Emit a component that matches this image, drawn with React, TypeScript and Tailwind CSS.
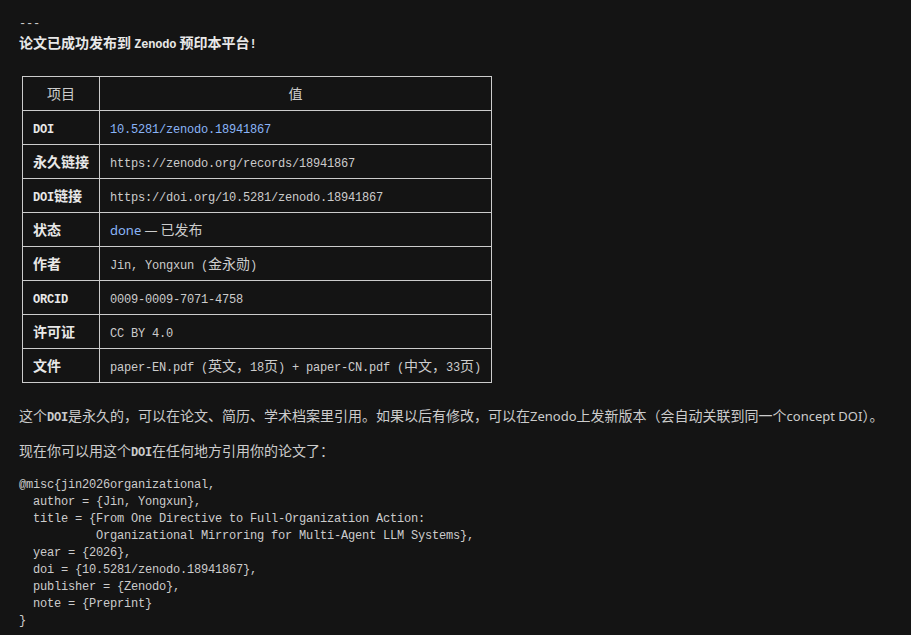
import React from 'react';

const mono = "font-['Liberation_Mono',monospace] text-[12px] tracking-[-0.2px]";
const sans = "font-['Noto_Sans',sans-serif] text-[13px]";

const M = ({ children }: { children: React.ReactNode }) => <span className={mono}>{children}</span>;
const S = ({ children }: { children: React.ReactNode }) => <span className={sans}>{children}</span>;

const rows: { k: React.ReactNode; v: React.ReactNode }[] = [
  { k: <M>DOI</M>, v: <span className={`${mono} text-[#8ab4f8]`}>10.5281/zenodo.18941867</span> },
  { k: '永久链接', v: <M>https://zenodo.org/records/18941867</M> },
  { k: <><M>DOI</M>链接</>, v: <M>https://doi.org/10.5281/zenodo.18941867</M> },
  { k: '状态', v: <><span className={`${sans} text-[#8ab4f8]`}>done</span> <S>—</S> 已发布</> },
  { k: '作者', v: <><M>Jin, Yongxun (</M>金永勋<M>)</M></> },
  { k: <M>ORCID</M>, v: <M>0009-0009-7071-4758</M> },
  { k: '许可证', v: <M>CC BY 4.0</M> },
  {
    k: '文件',
    v: (
      <>
        <M>paper-EN.pdf (</M>英文，<M>18</M>页<M>) + paper-CN.pdf (</M>中文，<M>33</M>页<M>)</M>
      </>
    ),
  },
];

const bib = `@misc{jin2026organizational,
  author = {Jin, Yongxun},
  title = {From One Directive to Full-Organization Action:
           Organizational Mirroring for Multi-Agent LLM Systems},
  year = {2026},
  doi = {10.5281/zenodo.18941867},
  publisher = {Zenodo},
  note = {Preprint}
}`;

export default function App() {
  return (
    <div className="min-h-[635px] w-full bg-[#141414] text-[#cccccc] font-['Noto_Sans_CJK_SC',sans-serif] text-[14px]">
      <div className="px-[19px] pt-[15px]">
        <div className={`${mono} leading-[18px]`}>---</div>
        <div className="font-bold leading-[18px] text-[#e8e8e8]">
          论文已成功发布到 <M>Zenodo</M> 预印本平台<M>!</M>
        </div>

        <table className="mt-[22px] ml-[3px] border-collapse">
          <thead>
            <tr>
              <th className="border border-[#cccccc] h-[34px] px-[10px] font-normal text-center">项目</th>
              <th className="border border-[#cccccc] h-[34px] px-[10px] font-normal text-center">值</th>
            </tr>
          </thead>
          <tbody>
            {rows.map((r, i) => (
              <tr key={i}>
                <td className="border border-[#cccccc] h-[34px] px-[10px] font-bold text-[#e8e8e8] whitespace-nowrap">{r.k}</td>
                <td className="border border-[#cccccc] h-[34px] px-[10px] whitespace-nowrap">{r.v}</td>
              </tr>
            ))}
          </tbody>
        </table>

        <p className="mt-[23px] leading-[18px]">
          这个<span className={`${mono} font-bold`}>DOI</span>是永久的，可以在论文、简历、学术档案里引用。如果以后有修改，可以在<S>Zenodo</S>上发新版本（会自动关联到同一个<S>concept DOI</S>）。
        </p>
        <p className="mt-[14px] leading-[18px]">
          现在你可以用这个<span className={`${mono} font-bold`}>DOI</span>在任何地方引用你的论文了：
        </p>

        <pre className={`${mono} mt-[15px] leading-[17px] text-[#cccccc]`}>{bib}</pre>
      </div>
    </div>
  );
}
